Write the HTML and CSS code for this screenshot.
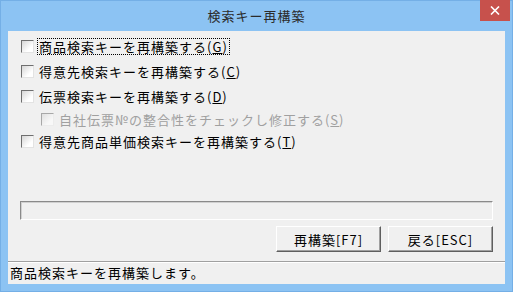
FILE: index.html
```html
<!DOCTYPE html>
<html lang="ja">
<head>
<meta charset="utf-8">
<title>検索キー再構築</title>
<link rel="stylesheet" href="styles.css">
</head>
<body>
<div class="window">
  <div class="titlebar">
    <span></span>
    <span class="title">検索キー再構築</span>
    <span class="close"><svg width="10" height="9" viewBox="0 0 10 9"><path d="M1 0.5 L9 8.5 M9 0.5 L1 8.5" stroke="#fff" stroke-width="1.6"/></svg></span>
  </div>
  <div class="client">
    <div class="options">
      <div class="row"><span class="cb"></span><span class="label focus">商品検索キーを再構築する(<u>G</u>)</span></div>
      <div class="row"><span class="cb"></span><span class="label">得意先検索キーを再構築する(<u>C</u>)</span></div>
      <div class="row"><span class="cb"></span><span class="label">伝票検索キーを再構築する(<u>D</u>)</span></div>
      <div class="row sub disabled"><span class="cb"></span><span class="label">自社伝票№の整合性をチェックし修正する(<u>S</u>)</span></div>
      <div class="row"><span class="cb"></span><span class="label">得意先商品単価検索キーを再構築する(<u>T</u>)</span></div>
    </div>
    <div class="progress"></div>
    <div class="buttons">
      <button class="btn">再構築[F7]</button>
      <button class="btn">戻る[ESC]</button>
    </div>
    <div class="status">商品検索キーを再構築します。</div>
  </div>
</div>
</body>
</html>
```

FILE: styles.css
```css
html, body {
  margin: 0;
  padding: 0;
  background: #8cc3f3;
}
.window {
  width: 513px;
  height: 292px;
  box-sizing: border-box;
  background: #8cc3f3;
  border: 1px solid #74afe6;
  display: flex;
  flex-direction: column;
  font-family: "Noto Sans CJK JP", "Noto Sans", sans-serif;
  font-size: 13px;
  color: #000;
}
.titlebar {
  height: 30px;
  display: grid;
  grid-template-columns: 1fr auto 1fr;
  align-items: start;
}
.title {
  font-size: 13px;
  letter-spacing: 1px;
  color: #2b2b2b;
  line-height: 30px;
}
.close {
  justify-self: end;
  margin-right: 2px;
  margin-top: -1px;
  width: 30px;
  height: 21px;
  background: #c7514c;
  display: flex;
  align-items: center;
  justify-content: center;
}
.client {
  margin: 0 7px 7px 7px;
  height: 253px;
  background: #f0f0f0;
  display: flex;
  flex-direction: column;
}
.options {
  padding-top: 3px;
  padding-left: 13px;
}
.row {
  height: 25px;
  display: flex;
  align-items: center;
}
.row.sub {
  height: 20px;
  padding-left: 20px;
}
.cb {
  width: 11px;
  height: 11px;
  border: 1px solid;
  border-color: #6f6f6f #e3e3e3 #e3e3e3 #6f6f6f;
  background: linear-gradient(135deg, #d6d6d6, #ffffff 70%);
  flex: none;
}
.label {
  margin-left: 3px;
  letter-spacing: 1px;
  line-height: 15px;
  padding: 0 1px;
  border: 1px dotted transparent;
}
.label.focus {
  border-color: #000;
}
.disabled .label {
  color: #a0a0a0;
}
.disabled .cb {
  border-color: #a8a8a8 #ececec #ececec #a8a8a8;
  background: linear-gradient(135deg, #e0e0e0, #f8f8f8 70%);
}
.progress {
  margin: 47px 12px 0 12px;
  height: 17px;
  border: 1px solid;
  border-color: #8a8a8a #ffffff #ffffff #8a8a8a;
  box-shadow: inset 1px 1px 0 #d0d0d0;
}
.buttons {
  margin-top: 6px;
  margin-right: 12px;
  display: flex;
  justify-content: flex-end;
  gap: 7px;
}
.btn {
  width: 105px;
  height: 26px;
  box-sizing: border-box;
  background: #f0f0f0;
  border: 1px solid;
  border-color: #ffffff #5f5f5f #5f5f5f #ffffff;
  box-shadow: inset -1px -1px 0 #a0a0a0;
  font-family: "Noto Sans CJK JP", "Noto Sans", sans-serif;
  font-size: 13px;
  letter-spacing: 1px;
  color: #000;
  padding: 0;
}
.status {
  margin-top: auto;
  height: 22px;
  border-top: 1px solid #a0a0a0;
  box-shadow: inset 0 1px 0 #ffffff;
  padding-left: 2px;
  letter-spacing: 1px;
  line-height: 21px;
}
```
